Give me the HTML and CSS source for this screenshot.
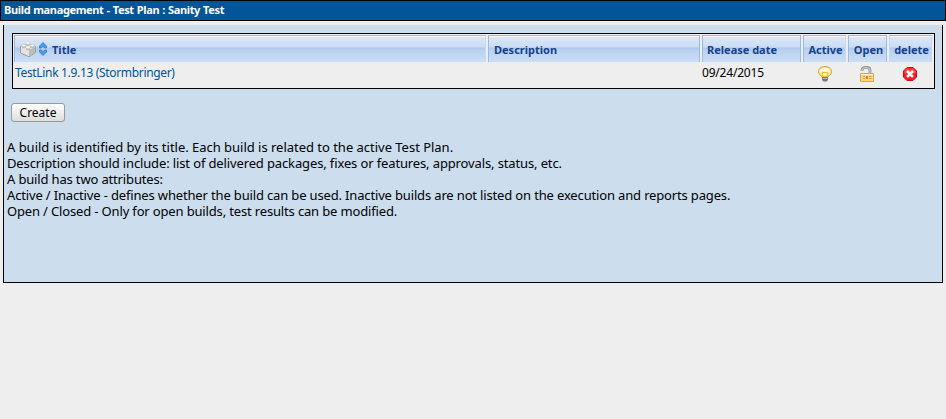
FILE: index.html
```html
<!DOCTYPE html>
<html lang="en">
<head>
<meta charset="utf-8">
<title>Build management</title>
<link rel="stylesheet" href="styles.css">
</head>
<body>
<h1 class="title"><span>Build management - Test Plan : Sanity Test</span></h1>
<main class="workback">
  <div class="builds">
    <div class="th first">
      <svg class="brick" width="18" height="17" viewBox="0 0 18 17">
        <path d="M1.500 5.500 9 2.500l7.500 3v6L10 15.800 1.500 12z" fill="#e4e4e2" stroke="#949492" stroke-width=".9"/>
        <path d="M2 5.700 9 2.800l7 2.900L10 9z" fill="#fafaf8"/>
        <path d="M10 9v6.300l6.100-4.100V5.700z" fill="#bcbcba"/>
        <path d="M6.700 2v2c0 1.200 4.200 1.200 4.200 0V2M3 4.500v2c0 1.200 4 1.200 4 0v-2M11 4.500v2c0 1.200 4 1.200 4 0v-2M7 6.500v2c0 1.200 4 1.200 4 0v-2" fill="#bdbdbb"/>
        <g fill="#fff" stroke="#aaa" stroke-width=".4"><ellipse cx="8.800" cy="2" rx="2.200" ry="1.200"/><ellipse cx="5" cy="4.500" rx="2.100" ry="1.200"/><ellipse cx="13" cy="4.500" rx="2.100" ry="1.200"/><ellipse cx="9" cy="6.500" rx="2.100" ry="1.200"/></g>
      </svg>
      <svg class="sort" width="8" height="14" viewBox="0 0 8 14"><path d="M4 .5 7.500 4v2H6L4 4.500 2 6H.5V4zM4 13.500.5 10V8H2l2 1.500L6 8h1.500v2z" fill="#4a9bea" stroke="#2673c9" stroke-width=".7"/></svg>
      <span class="t-title">Title</span>
    </div>
    <div class="th"><span>Description</span></div>
    <div class="th release"><span>Release date</span></div>
    <div class="th mid"><span>Active</span></div>
    <div class="th mid open"><span>Open</span></div>
    <div class="th mid plain"><span>delete</span></div>
    <div class="td"><a>TestLink 1.9.13 (Stormbringer)</a></div>
    <div class="td"></div>
    <div class="td date"><span>09/24/2015</span></div>
    <div class="td icon">
      <svg width="16" height="16" viewBox="0 0 16 16"><path d="M8 .6c4.200 0 6.500 2 6.500 4.900 0 2.600-1.800 3.900-3.500 5.300H5C3.300 9.400 1.500 8.100 1.500 5.500 1.500 2.600 3.800.6 8 .6z" fill="#ffdf85" stroke="#dfa040"/><path d="M3 6C3 3.500 5 1.800 8 1.800S13 3.500 13 6l-2.500 2h-5z" fill="#fffbe2"/><path d="M5.500 10.500V6L7 6.800l1-.8 1 .8 1.500-.8v4.500z" fill="#fff3ae" stroke="#f0b22b" stroke-width=".9"/><path d="M5 11h6v3l-1.500 1.500h-3L5 14z" fill="#777"/><path d="M5.500 12.500h5" stroke="#bbb"/></svg>
    </div>
    <div class="td icon lock">
      <svg width="16" height="16" viewBox="0 0 16 16"><path d="M3 5V4c0-3.600 8-3.600 8 0v4" fill="none" stroke="#969696" stroke-width="2.800"/><path d="M3 5V4c0-3.200 8-3.200 8 0v4" fill="none" stroke="#d4d4d4"/><path d="M1.500 7.500h13v8h-13z" fill="#fbdb7c" stroke="#dda53b"/><path d="M2 8.500h12" stroke="#fff3c2"/><path d="M4 10.500h2m4 0h2.500M4 12.500h2m4 0h2.500" stroke="#d9a13c"/><path d="M7.200 10h1.600v3H7.200z" fill="#b97b22"/></svg>
    </div>
    <div class="td icon last">
      <svg width="16" height="16" viewBox="0 0 16 16"><path d="M5 1.500h6L14.500 5v6L11 14.500H5L1.500 11V5z" fill="#f61b22" stroke="#d7090e"/><path d="M5.300 2.400h5.400l2.900 2.900v2.200H2.400V5.300z" fill="#ff4544"/><path d="m5 5 6 6m0-6-6 6" stroke="#fff" stroke-width="2.600"/></svg>
    </div>
  </div>
  <button class="create">Create</button>
  <div class="help">
    <div class="intro"><span>A build is identified by its title. Each build is related to the active Test Plan.</span></div>
    <div class="wide fields"><span>Description should include: list of delivered packages, fixes or features, approvals, status, etc.</span></div>
    <div class="wide"><span>A build has two attributes:</span></div>
    <div class="wide"><span>Active / Inactive - defines whether the build can be used. Inactive builds are not listed on the execution and reports pages.</span></div>
    <div class="wide"><span>Open / Closed - Only for open builds, test results can be modified.</span></div>
  </div>
</main>
</body>
</html>
```
FILE: styles.css
```css
* { box-sizing: border-box; }
body {
  margin: 0;
  background: #eee;
  color: #000;
  font-family: "Trebuchet MS", "Noto Sans", sans-serif;
  font-size: 12px;
}
span, a { display: inline-block; white-space: nowrap; }
.title {
  margin: 0;
  height: 21px;
  padding-left: 3px;
  border: 1px solid #000;
  background: #005498;
  color: #fff;
  font-size: 11px;
  line-height: 18px;
}
.title span { letter-spacing: -0.35px; word-spacing: 0.5px; }
.workback {
  margin: 4px 3px 0;
  height: 258px;
  padding: 8px 8px 0;
  border: 1px solid #000;
  border-top: 0;
  background: #cde;
}
.builds {
  display: grid;
  grid-template-columns: 472px 212px 99px 43px 39px 43px;
  grid-template-rows: 27px 22px;
  column-gap: 2px;
  width: 923px;
  height: 56px;
  padding: 1px;
  border: 1px solid #000;
  background: #eee;
}
.th {
  display: flex;
  align-items: center;
  padding: 0 0 0 5px;
  border: 1px solid #99bbe8;
  border-bottom: 0;
  background: linear-gradient(#dce8f8 0, #cbddf3 11px, #abc7ec 12px, #b9d1f1 14px, #ccdef6 100%);
  box-shadow: inset 0 1px #f4f8fd;
  color: #15428b;
  font-weight: 700;
  font-size: 11px;
}
.first { padding-left: 4px; border-right-color: #c8daf2; }
.first svg { flex: none; }
.release { padding-left: 4px; }
.mid { padding-left: 2px; justify-content: center; border-right-color: #c8daf2; }
.open { border-right-color: #99bbe8; }
.plain { border-left-color: #c8daf2; }
.sort { margin: 0 5px 0 2px; }
.td { padding-left: 1px; line-height: 22px; }
.td a { color: #005498; letter-spacing: -0.33px; }
.date { padding-left: 0; line-height: 21px; letter-spacing: -0.2px; }
.td.icon { display: flex; justify-content: center; padding: 4px 0 0; }
.td.icon.lock { padding-right: 1px; }
.td.icon.last { padding-right: 2px; }
.create {
  display: block;
  width: 54px;
  height: 19px;
  margin: 14px 0 0 -1px;
  padding: 0;
  border: 1px solid #999;
  border-radius: 3px;
  background: linear-gradient(#fff, #ddd);
  color: #000;
  font: 12px/17px "Trebuchet MS", "Noto Sans", sans-serif;
}
.help { margin: 17px 0 0 -5px; font-size: 13px; line-height: 16px; }
.help > div { height: 16px; }
.intro { letter-spacing: -0.02px; }
.wide { letter-spacing: -0.155px; }
.fields { letter-spacing: -0.13px; }
```
